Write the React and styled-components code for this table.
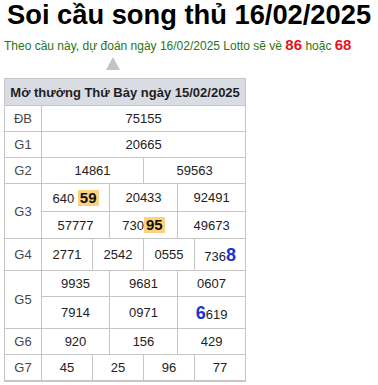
import React from "react";
import styled, { createGlobalStyle } from "styled-components";

const GlobalStyle = createGlobalStyle`
  body {
    margin: 0;
    background: #fff;
    font-family: "Liberation Sans", Arial, sans-serif;
  }
`;

const results = [
  { label: "ĐB", rows: [{ h: 26, cells: ["75155"] }] },
  { label: "G1", rows: [{ h: 26, cells: ["20665"] }] },
  { label: "G2", rows: [{ h: 26, cells: ["14861", "59563"] }] },
  {
    label: "G3",
    rows: [
      { h: 28, cells: [{ head: "640 ", mark: "59" }, "20433", "92491"] },
      { h: 27, cells: ["57777", { head: "730", mark: "95" }, "49673"] },
    ],
  },
  {
    label: "G4",
    rows: [{ h: 32, cells: ["2771", "2542", "0555", { head: "736", blue: "8" }] }],
  },
  {
    label: "G5",
    rows: [
      { h: 26, cells: ["9935", "9681", "0607"] },
      { h: 32, cells: ["7914", "0971", { blue: "6", tail: "619" }] },
    ],
  },
  { label: "G6", rows: [{ h: 26, cells: ["920", "156", "429"] }] },
  { label: "G7", rows: [{ h: 26, cells: ["45", "25", "96", "77"] }] },
];

const Number = ({ value }) => {
  if (typeof value === "string") return value;
  return (
    <>
      {value.blue && !value.head ? <Blue>{value.blue}</Blue> : null}
      {value.head}
      {value.mark ? <Mark>{value.mark}</Mark> : null}
      {value.blue && value.head ? <Blue>{value.blue}</Blue> : null}
      {value.tail}
    </>
  );
};

const App = () => (
  <Page>
    <GlobalStyle />
    <Title>Soi cầu song thủ 16/02/2025</Title>
    <Lead>
      Theo cầu này, dự đoán ngày 16/02/2025 Lotto sẽ về <Hot>86</Hot> hoặc{" "}
      <Hot>68</Hot>
    </Lead>
    <Arrow />
    <Table>
      <colgroup>
        <col style={{ width: 37 }} />
        {Array.from({ length: 12 }).map((_, i) => (
          <col key={i} style={{ width: 17 }} />
        ))}
      </colgroup>
      <tbody>
        <tr>
          <Head colSpan={13}>Mở thưởng Thứ Bảy ngày 15/02/2025</Head>
        </tr>
        {results.map(({ label, rows }) =>
          rows.map((row, r) => (
            <Row key={label + r} $h={row.h}>
              {r === 0 ? <Label rowSpan={rows.length}>{label}</Label> : null}
              {row.cells.map((value, c) => (
                <Cell key={c} colSpan={12 / row.cells.length}>
                  <Number value={value} />
                </Cell>
              ))}
            </Row>
          ))
        )}
      </tbody>
    </Table>
  </Page>
);

const Page = styled.div`
  padding: 0 4px;
  width: 370px;
`;

const Title = styled.h1`
  margin: 0;
  padding-left: 3px;
  font-size: 27.3px;
  line-height: 29px;
  font-weight: bold;
  color: #000;
  white-space: nowrap;
`;

const Lead = styled.p`
  margin: 8px 0 0;
  font-size: 12px;
  line-height: 18px;
  color: #2b7413;
  white-space: nowrap;
`;

const Hot = styled.b`
  font-size: 15px;
  line-height: 15px;
  color: #e3141c;
`;

const Arrow = styled.div`
  width: 0;
  height: 0;
  margin: 2px 0 0 102px;
  border-left: 7px solid transparent;
  border-right: 7px solid transparent;
  border-bottom: 13px solid #c3c3c3;
`;

const Table = styled.table`
  margin-top: 8px;
  width: 241px;
  table-layout: fixed;
  border-collapse: collapse;
  border: 1px solid #c6c6c6;
  border-bottom-width: 2px;
  font-size: 13px;
  color: #222;
`;

const Head = styled.td`
  height: 26px;
  padding: 0;
  background: #dadce4;
  border: 1px solid #c6c6c6;
  font-weight: bold;
  text-align: center;
  color: #1e1e1e;
  white-space: nowrap;
`;

const Row = styled.tr`
  height: ${(p) => p.$h}px;
`;

const Label = styled.td`
  padding: 0;
  border: 1px solid #c6c6c6;
  text-align: center;
  color: #474747;
`;

const Cell = styled.td`
  padding: 0;
  border: 1px solid #c6c6c6;
  text-align: center;
  white-space: nowrap;
  line-height: 15px;
`;

const Mark = styled.span`
  display: inline-block;
  padding: 0 2px;
  line-height: 16px;
  font-size: 15px;
  font-weight: bold;
  background: #fdd17f;
  color: #111;
  vertical-align: baseline;
`;

const Blue = styled.b`
  font-size: 18px;
  line-height: 18px;
  color: #1535d6;
`;

export default App;
